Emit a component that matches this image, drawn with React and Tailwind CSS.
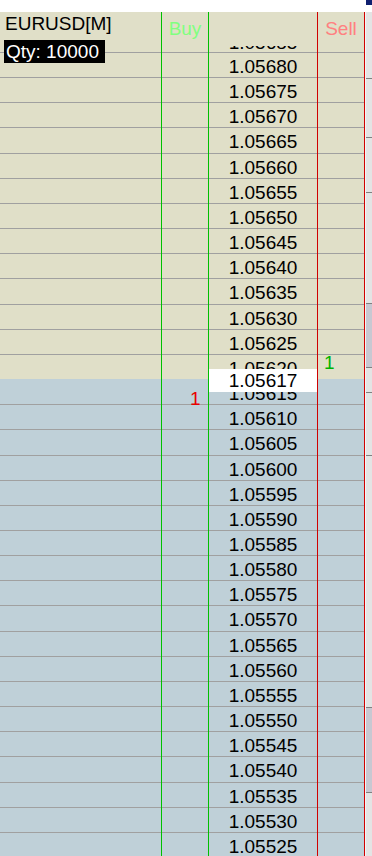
import React from "react";

// Ladder rows: ask side (beige) above, bid side (blue) below.
const rows = Array.from({ length: 32 }, (_, i) => ({
    price: ((105680 - 5 * i) / 100000).toFixed(5),
    ask: i < 13,
}));

// Scrollbar strip at the right edge: [height, colour].
const strip = [
    [66, "bg-[#e4e4e4]"],
    [1, "bg-[#808080]"],
    [58, "bg-[#e4e4e4]"],
    [1, "bg-[#808080]"],
    [54, "bg-[#e4e4e4]"],
    [1, "bg-[#808080]"],
    [110, "bg-[#e4e4e4]"],
    [1, "bg-[#808080]"],
    [63, "bg-[#c8c8d2]"],
    [1, "bg-[#808080]"],
    [24, "bg-[#e4e4e4]"],
    [1, "bg-[#808080]"],
    [62, "bg-[#e4e4e4]"],
    [1, "bg-[#808080]"],
    [251, "bg-[#e4e4e4]"],
    [1, "bg-[#808080]"],
    [84, "bg-[#c8c8d2]"],
    [1, "bg-[#808080]"],
    [80, "bg-[#e4e4e4]"],
];

const Cell = ({ row, index, children }) => (
    <div
        className={`h-[25.16px] shrink-0 border-t ${
            index === 13 ? "border-transparent" : "border-[#a0a0a0]"
        } ${row.ask ? "bg-[#e0dfc8]" : "bg-[#bfd0d8]"}`}
    >
        {children}
    </div>
);

const Header = ({ children, className = "" }) => (
    <div className={`h-[40px] shrink-0 bg-[#e0dfc8] ${className}`}>{children}</div>
);

export default function App() {
    return (
        <div className="h-[856px] w-[372px] overflow-hidden bg-white font-['Liberation_Sans',Arial,sans-serif] text-[19px] text-black">
            <div className="flex h-[12px] justify-end">
                <div className="h-[5px] w-[6px] bg-[#102070]" />
            </div>

            <div className="flex">
                {/* Symbol column */}
                <div className="flex w-[162px] shrink-0 flex-col border-r border-[#00c000]">
                    <Header className="pl-[5px] pt-[1px]">
                        <div className="leading-[22px]">EURUSD[M]</div>
                        <div className="relative z-10 -ml-[1px] mt-[5px] h-[23px] w-[101px] bg-black pl-[2px] pt-[1px] leading-[22px] text-white">
                            Qty: 10000
                        </div>
                    </Header>
                    {rows.map((row, i) => (
                        <Cell key={row.price} row={row} index={i} />
                    ))}
                </div>

                {/* Buy column */}
                <div className="flex w-[47px] shrink-0 flex-col border-r border-[#00c000]">
                    <Header className="pt-[6px] text-center text-[#80ff80]">
                        <div className="leading-[22px]">Buy</div>
                    </Header>
                    {rows.map((row, i) => (
                        <Cell key={row.price} row={row} index={i}>
                            {i === 13 && (
                                <span className="relative z-10 block pl-[28px] pt-[8px] leading-[22px] text-[#e80000]">
                                    1
                                </span>
                            )}
                        </Cell>
                    ))}
                </div>

                {/* Price column */}
                <div className="relative flex w-[109px] shrink-0 flex-col border-r border-[#d00000]">
                    <Header className="flex flex-col justify-end">
                        <div className="flex h-[6px] flex-col justify-end overflow-hidden">
                            <div className="h-[24px] shrink-0 pt-[3px] text-center leading-[23px]">
                                1.05685
                            </div>
                        </div>
                    </Header>
                    {rows.map((row, i) => (
                        <Cell key={row.price} row={row} index={i}>
                            <div className="pt-[2px] text-center leading-[23px]">{row.price}</div>
                        </Cell>
                    ))}
                    <div className="absolute left-0 right-0 top-[357px] z-10 h-[23px] bg-white text-center leading-[23px]">
                        1.05617
                    </div>
                </div>

                {/* Sell column */}
                <div className="flex w-[47px] shrink-0 flex-col border-r border-[#d00000]">
                    <Header className="pt-[6px] text-center text-[#ff8080]">
                        <div className="leading-[22px]">Sell</div>
                    </Header>
                    {rows.map((row, i) => (
                        <Cell key={row.price} row={row} index={i}>
                            {i === 12 && (
                                <span className="relative z-10 block pl-[6px] leading-[16px] text-[#00b400]">
                                    1
                                </span>
                            )}
                        </Cell>
                    ))}
                </div>

                {/* Edge strip */}
                <div className="flex w-[7px] shrink-0 flex-col border-l border-[#f4f4f4]">
                    {strip.map(([h, c], i) => (
                        <div key={i} className={`shrink-0 ${c}`} style={{ height: h }} />
                    ))}
                </div>
            </div>
        </div>
    );
}
